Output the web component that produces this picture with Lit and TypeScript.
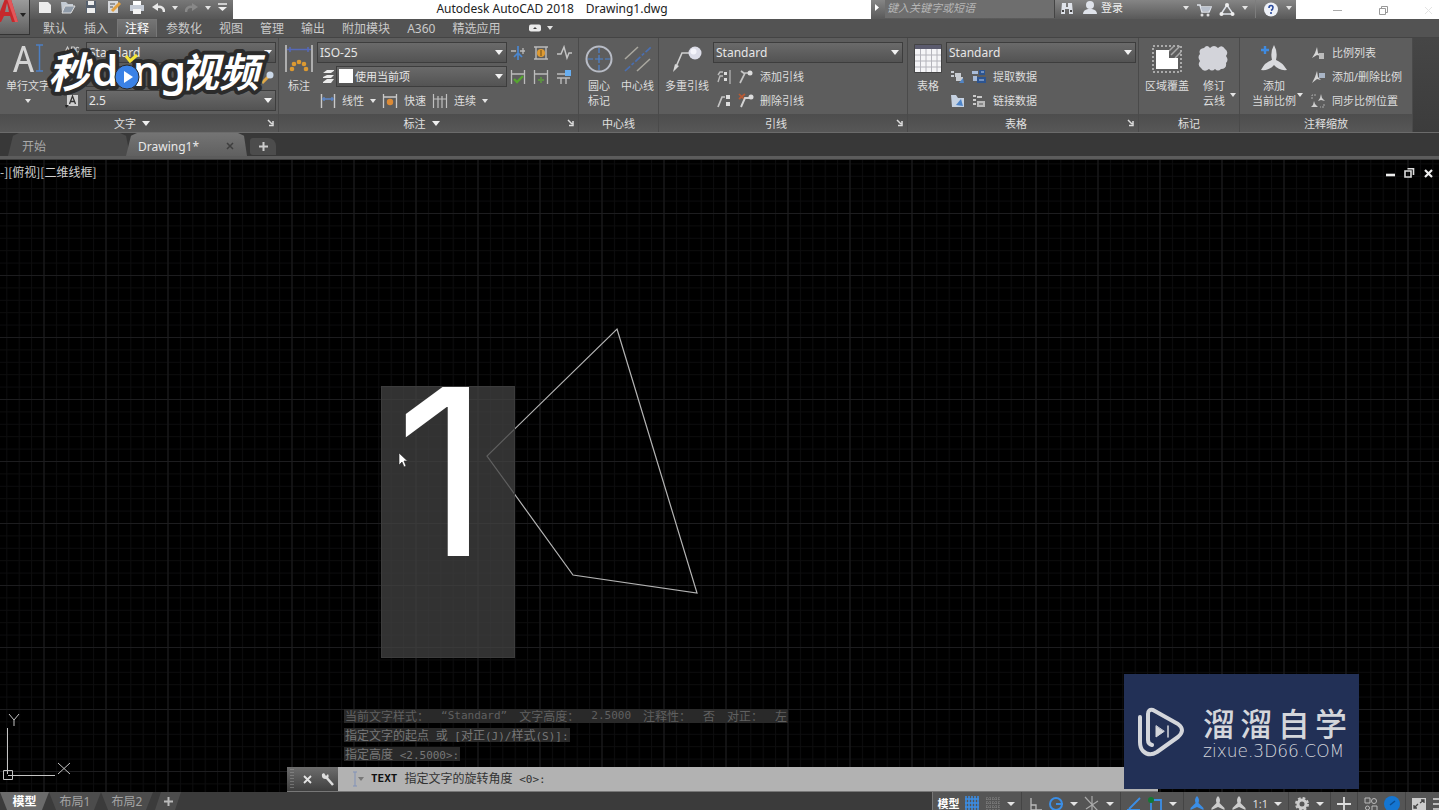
import { LitElement, html, css, svg, nothing, TemplateResult } from "lit";
import { customElement, property } from "lit/decorators.js";

const icon = (w: number, h: number, body: unknown) =>
  html`<svg class="icon" width=${w} height=${h} viewBox="0 0 ${w} ${h}" fill="none" aria-hidden="true">${body}</svg>`;

/* ---------- large ribbon icons (32 x 30) ---------- */
const big = {
  text: svg`<path d="M1 28 10 2h3l9 26h-3.600l-2.600-8H7.200l-2.600 8zM8.200 17h6.800L11.500 6z" fill="#d4d4d4"/>
    <path d="M24 1h7M24 27h7M27.500 1v26" stroke="#4c7fc4" stroke-width="1.500"/>`,
  dim: svg`<path d="M3 1v27M29 1v27" stroke="#c9c9c9" stroke-width="1.500"/><path d="M4 5.500h24M7 3v5M25 3v5" stroke="#5669b8" stroke-width="1.500"/>
    <g fill="#dd9a32"><circle cx="9" cy="25" r="2.300"/><circle cx="11" cy="20" r="2.300"/><circle cx="16" cy="18" r="2.300"/><circle cx="21" cy="20" r="2.300"/><circle cx="23" cy="25" r="2.300"/></g>`,
  center: svg`<circle cx="16" cy="15" r="12.500" stroke="#b8bcc6" stroke-width="2"/><path d="M16 4v5M16 21v5M5 15h5M22 15h5M16 11v8M12 15h8" stroke="#4d83cf" stroke-width="1.200"/>`,
  centerline: svg`<path d="M3 15 16 3M15 27 28 15" stroke="#a9a79f" stroke-width="1.600"/><path d="M3 27 29 3" stroke="#4a6fb0" stroke-width="1.700" stroke-dasharray="7 2 3 2"/>`,
  leader: svg`<path d="M4 25 11 9h9" stroke="#d0d0d0" stroke-width="1.600"/><path d="m2 28 2-8 4 2z" fill="#d8d8d8"/><circle cx="24" cy="9" r="6.500" fill="#dcdde8"/><circle cx="22.500" cy="7.500" r="3" fill="#f5f5fb"/>`,
  table: svg`<path d="M3 1h26v27H3z" fill="#f5f5f7"/><path d="M3 1h26v4H3z" fill="#5b5b6e"/><path d="M3 11h26M3 17h26M3 23h26M8.500 5v23M14 5v23M19.500 5v23M25 5v23" stroke="#b4b4bb" stroke-width="1"/><path d="M2.500.500h27v28h-27z" stroke="#444"/>`,
  wipeout: svg`<path d="M2 2h28v26H2z" stroke="#aaa" stroke-width="2" stroke-dasharray="2 2"/><path d="m18 7 5-5M20 11l9-9M24 14l6-6" stroke="#a8a8a8" stroke-width="1.500"/><path d="M5 6h13v8h9v11H5z" fill="#fff"/>`,
  cloud: svg`<path d="M6 4q3-4 6 0 4-4 8 0 4-4 7 1 4 3 1 7 3 4 0 7 1 6-5 6-3 3-6 0-3 3-6 0-5 4-8-1-4-3-1-7-3-4 0-7-2-5 4-6z" fill="#d3d4da"/>`,
  scale: svg`<path d="M16 1q4 7 2 15 6 2 11 10-8 1-13-5-5 6-13 5 4-8 11-10-2-8 2-15z" fill="#d9dadd"/><path d="M3 6h8M7 2v8" stroke="#3f8be0" stroke-width="2.400"/>`,
};

/* ---------- small ribbon icons (16 x 16) ---------- */
const small = {
  abc: svg`<path d="M1 7 3.500 2 6 7M2 5.500h3M7.500 2v5H10a1.200 1.200 0 0 0 0-2.500H7.500 9.800A1.200 1.200 0 0 0 9.800 2zM15 3q-3-2-3 1.500T15 6.500" stroke="#ccc" stroke-width="1.100"/><path d="m4 11 3 3 6-6" stroke="#78a85e" stroke-width="1.500"/>`,
  style: svg`<path d="M3 2h11v11H3z" fill="#d0d0d0"/><path d="m5.500 11 3-8 3 8M6.500 8.500h4" stroke="#333" stroke-width="1.300"/><path d="M1 12h4l-3 3z" fill="#222"/>`,
  find: svg`<path d="m2 14 6-6" stroke="#e2a849" stroke-width="3"/><circle cx="10" cy="6" r="3.500" fill="#cbd8e8"/>`,
  layers: svg`<path d="m3 4 4-3h8l-4 3zM3 8l4-2h7l-3 3H3zM3 13l4-3h7l-3 4H3z" fill="#ececec"/>`,
  linear: svg`<path d="M1.500 1v14M14.500 1v14" stroke="#c9c9c9" stroke-width="1.400"/><path d="M2 6h12M4 4v4M12 4v4" stroke="#5d87c7" stroke-width="1.400"/>`,
  quick: svg`<path d="M1.500 1v14M14.500 1v14M2 4h12" stroke="#c9c9c9" stroke-width="1.300"/><circle cx="8" cy="9" r="3.200" fill="#dc8a35"/>`,
  cont: svg`<path d="M1.500 1v14M6 3v12M10 3v12M14.500 1v14M2 6h12" stroke="#c0c0c0" stroke-width="1.200"/>`,
  brk: svg`<path d="M1 6h5M10 6h5M13 3v6" stroke="#bbb" stroke-width="1.300"/><path d="M8 1v14M4 12l4-4 4 4" stroke="#4b87cf" stroke-width="1.700"/>`,
  space: svg`<path d="M1 2h14M1 14h14M3 2v12M13 2v12" stroke="#bbb" stroke-width="1.400"/><circle cx="8" cy="8" r="4" fill="#dd9a32"/><path d="M8 5v6" stroke="#6c4a15"/>`,
  jog: svg`<path d="M1 9h4l3-7 3 11 2-5h3" stroke="#c4c4c4" stroke-width="1.500"/>`,
  inspect: svg`<path d="M1.500 1v14M14.500 1v14M2 5h12" stroke="#bbb" stroke-width="1.300"/><path d="m4 10 3 3 6-6" stroke="#56a431" stroke-width="2.400"/>`,
  update: svg`<path d="M1.500 1v14M14.500 1v14M2 5h12" stroke="#bbb" stroke-width="1.300"/><path d="M5 11h6M8 8v6" stroke="#5d8f44" stroke-width="1.800"/>`,
  toler: svg`<path d="M1 5h9M5 9v6M10 9v6M1 9h13" stroke="#bbb" stroke-width="1.400"/><path d="M9 1h6v6H9z" fill="#68aef0"/>`,
  align: svg`<path d="m2 13 2-6h3M2 6l2-3h3" stroke="#bbb" stroke-width="1.400"/><path d="M8 3h3v3H8zM8 9h3v3H8z" fill="#ddd"/><path d="M14 1v14" stroke="#ccc"/>`,
  addLd: svg`<path d="m2 14 5-10h3M3 2l4 3" stroke="#c4c4c4" stroke-width="1.700"/><circle cx="12" cy="4" r="2.500" fill="#ddd"/>`,
  collect: svg`<path d="m2 14 4-10h3" stroke="#c4c4c4" stroke-width="1.700"/><path d="M10 2h4v4h-4zM10 9h4v4h-4z" fill="#ddd"/>`,
  delLd: svg`<path d="m1 1 5 5M7 1 1 6" stroke="#b85a34" stroke-width="1.700"/><path d="m3 14 4-9h4" stroke="#d3d3d3" stroke-width="1.900"/><circle cx="13" cy="4" r="2.500" fill="#ddd"/>`,
  extract: svg`<path d="M2 2h3v2H2zM2 6h3v2H2zM6 4h6v4h2v4H7V8H6z" fill="#c8ccd2"/><path d="m10 14 4-5 1 5z" fill="#5285c4"/>`,
  sync: svg`<path d="M1 2h6v3H1zM2 7h4v5H2z" fill="#a8bbd8"/><path d="M8 1h6v5H8zM6 8h9v6H6z" fill="#2c5490"/><path d="M8 11h5M10 3h3" stroke="#b7cdf0"/>`,
  link: svg`<path d="M2 2h5l2 3h6v9H3z" fill="#c6d2e2"/><path d="m7 12 5-6 2 7z" fill="#4c84c9"/>`,
  dlink: svg`<path d="M2 2h3v2H2zM2 6h3v2H2zM2 10h3v2H2zM6 3h5v2H6z" fill="#c9c9c9"/><path d="M6 8h8v6H6z" fill="#b9b9b9"/><path d="M8 11h4" stroke="#555"/>`,
  slist: svg`<path d="m7 2 1 6 3 3-4-1-5 3 3-5z" fill="#d6d6d6"/><path d="M9 8h5v6H9z" fill="#bbb"/>`,
  sadd: svg`<path d="m7 2 1 6 3 3-4-1-5 4 3-6z" fill="#d6d6d6"/><path d="M9 4h6v5H9z" fill="#a9b5c6"/>`,
  ssync: svg`<path d="M2 6V2h4M14 11v3h-4" stroke="#aaa" stroke-dasharray="2 1"/><path d="m11 1 1 4 3 3-4-1-3 1 2-3zM4 8l1 3 3 3H1l2-2z" fill="#cfcfcf"/>`,
};

/* ---------- quick access ---------- */
const quick = [
  svg`<path d="M2 2h9l3 3v8H2z" fill="#ececec"/>`,
  svg`<path d="M1 2h5l2 2h5v2H5l-3 7z" fill="#c4cbd4"/><path d="m2 13 3-7h10l-4 7z" fill="#8e9aa8" stroke="#ddd"/>`,
  svg`<path d="M3 1h10v12H3z" fill="#56606d"/><path d="M5 1h6v4H5zM4 8h8v5H4z" fill="#eee"/>`,
  svg`<path d="M2 1h10v12H2z" fill="#d6d8dc"/><path d="m6 11 8-8" stroke="#e2a142" stroke-width="3"/><path d="M4 4h5M4 7h3" stroke="#555"/>`,
  svg`<path d="M4 1h8v4H4z" fill="#fff"/><path d="M1 5h14v6H1z" fill="#c6ccd6"/><path d="M4 9h8v5H4z" fill="#f4f4f4"/>`,
];

const cjk = /([\u2e80-\u9fff\uff00-\uffef]+)/;
const mixed = (text: string) =>
  text.split(cjk).map((run) => (run === "" ? nothing : cjk.test(run) ? html`<span class="han">${run}</span>` : run));

@customElement("cad-combo")
export class CadCombo extends LitElement {
  @property() value = "";
  @property() label = "";
  @property({ type: Boolean }) swatch = false;

  static styles = css`
    :host { display: block; position: relative; flex: 1; height: 21px; min-width: 0; }
    select {
      appearance: none; display: block; box-sizing: border-box; width: 100%; height: 21px; margin: 0; padding: 0 16px 0 2px;
      border: 1px solid #3d3d3d; border-radius: 0; color: #e6e6e6;
      background: linear-gradient(#6a6a6a, #535353);
      font: 12px/19px "Noto Sans", "Noto Sans CJK SC", sans-serif;
    }
    select.swatched { padding-left: 18px; font-size: 11px; }
    .arrow { position: absolute; right: 4px; top: 8px; border: 4px solid transparent; border-top: 5px solid #f2f2f2; border-bottom: 0; pointer-events: none; }
    .chip { position: absolute; left: 3px; top: 3px; width: 14px; height: 14px; background: #fff; pointer-events: none; }
  `;

  render() {
    return html`<select class=${this.swatch ? "swatched" : ""} aria-label=${this.label}><option>${this.value}</option></select>
      ${this.swatch ? html`<span class="chip"></span>` : nothing}<span class="arrow"></span>`;
  }
}

@customElement("cad-panel")
export class CadPanel extends LitElement {
  @property() name = "";
  @property({ type: Boolean }) more = false;
  @property({ type: Boolean }) launcher = false;

  static styles = css`
    :host { display: flex; flex-direction: column; flex: none; box-sizing: border-box; border-right: 1px solid #4a4a4a; background: #5d5d5d; }
    .body { display: flex; flex: 1; padding: 4px 2px 0 4px; }
    footer { position: relative; display: flex; justify-content: center; align-items: center; gap: 6px; height: 18px; background: linear-gradient(#4d4d4d, #575757); color: #e0e0e0; }
    footer.corner { padding-right: 14px; }
    .more { border: 4px solid transparent; border-top: 5px solid #eee; border-bottom: 0; }
    button { position: absolute; right: 3px; top: 5px; width: 8px; height: 8px; padding: 0; border: 0; background: none; }
    svg { display: block; }
  `;

  render() {
    return html`<div class="body"><slot></slot></div>
      <footer class=${this.launcher ? "corner" : ""}><span>${this.name}</span>${this.more ? html`<span class="more"></span>` : nothing}
        ${this.launcher
          ? html`<button aria-label=${this.name}><svg width="8" height="8" viewBox="0 0 8 8"><path d="M1 1l4 4M6 2v4.500H2" stroke="#ddd" stroke-width="1.500" fill="none" /></svg></button>`
          : nothing}
      </footer>`;
  }
}

@customElement("app-root")
export class AppRoot extends LitElement {
  static styles = css`
    :host { display: flex; flex-direction: column; height: 100vh; overflow: hidden; background: #383838; color: #dedede; font: 11px/15px "Noto Sans", "Noto Sans CJK SC", sans-serif; }
    * { box-sizing: border-box; }
    button { display: flex; align-items: center; margin: 0; padding: 0; border: 0; background: none; color: inherit; font: inherit; }
    .icon { display: block; flex: none; }
    .caret { flex: none; border: 3px solid transparent; border-top: 4px solid #e4e4e4; border-bottom: 0; }

    /* title bar */
    .titlebar { position: relative; display: flex; flex: none; height: 19px; background: #fff; color: #333; }
    .appbtn { position: absolute; z-index: 2; left: 0; top: 0; width: 30px; height: 35px; border: 1px solid #333; border-width: 0 1px 1px 0; background: linear-gradient(#9b9b9b, #5f5f5f); }
    .quick { display: flex; align-items: flex-start; gap: 7px; width: 233px; padding: 0 5px 0 37px; background: linear-gradient(#787878, #565656); }
    .quick .caret { margin-top: 6px; }
    .title { display: flex; flex: 1; justify-content: center; gap: 12px; font: 12px/17px "Noto Sans", sans-serif; color: #222; white-space: nowrap; }
    .info { display: flex; align-items: flex-start; width: 425px; background: linear-gradient(#858585, #595959); color: #eee; }
    .info .caret { margin-top: 6px; }
    .search { width: 170px; height: 18px; margin: 0 4px 0 5px; padding: 0 2px 4px; border: 0; border-right: 1px solid #444; background: #6e6e6e; font: italic 11px/14px "Noto Sans CJK SC", sans-serif; }
    .search::placeholder { color: #b6b6b6; opacity: 1; }
    .signin { gap: 4px; margin-left: 8px; flex: 1; }
    .tray { display: flex; gap: 7px; padding-right: 4px; }
    .tray i { width: 1px; height: 18px; background: #7d7d7d; }
    .winbtns { display: flex; justify-content: space-between; width: 143px; padding: 2px 5px 0 36px; }

    /* ribbon tabs */
    .tabs { display: flex; gap: 1px; flex: none; height: 19px; padding-left: 35px; background: #535353; border-bottom: 1px solid #444; font-size: 12px; }
    .tabs button { padding: 0 8px; height: 18px; color: #cacaca; }
    .tabs button.on { border: 1px solid #777; border-bottom: 0; padding: 0 7px; background: linear-gradient(#757575, #606060); color: #fff; }
    .tabs .drop { gap: 6px; margin-left: 12px; }

    /* ribbon */
    .ribbon { display: flex; flex: none; height: 95px; border-bottom: 1px solid #6b6b6b; background: linear-gradient(#464646, #3c3c3c); }
    .big { position: relative; flex-direction: column; justify-content: flex-start; align-self: flex-start; gap: 4px; padding: 2px 0 0; line-height: 15px; text-align: center; white-space: nowrap; }
    .big .caret { margin-top: 2px; }
    .big .side { position: absolute; right: -3px; top: 49px; }
    .rows { display: flex; flex-direction: column; gap: 3px; }
    .row { display: flex; align-items: center; height: 21px; gap: 6px; white-space: nowrap; }
    .row.tight { gap: 2px; }
    .row button { gap: 6px; }
    .find { flex: 1; height: 21px; min-width: 0; border: 1px solid #3d3d3d; background: #585858; color: #eee; }
    .w-text { width: 212px; margin-left: 12px; }
    .w-std { width: 190px; margin-left: 2px; }
    .p-text { width: 279px; } .p-dim { width: 300px; } .p-center { width: 80px; } .p-leader { width: 249px; } .p-table { width: 231px; } .p-mark { width: 101px; } .p-scale { width: 173px; }
    .w48 { width: 48px; } .w52 { width: 52px; } .w32 { width: 32px; } .w38 { width: 38px; }
    .grid3 { display: grid; grid-template-columns: repeat(3, 16px); grid-auto-rows: 16px; gap: 8px 7px; margin: 3px 0 0 3px; align-self: flex-start; }
    .indent { padding-left: 3px; }
    .spread { margin-left: 4px; }
    .scales { margin-left: 10px; }

    /* drawing tabs */
    .files { display: flex; flex: none; height: 23px; padding-left: 8px; background: #383838; }
    .files button { height: 23px; padding-top: 3px; font-size: 12px; }
    .files .file { width: 122px; padding: 3px 14px 0; background: #4b4b4b; color: #a9a9a9; clip-path: polygon(0 100%, 5px 12%, 11px 0, 112px 0, 118px 12%, 100% 100%); }
    .files .on { width: 121px; justify-content: space-between; padding: 3px 13px 0 12px; margin-left: -4px; background: linear-gradient(#747474, #606060); color: #e8e8e8; }
    .files .plus { width: 26px; height: 17px; padding: 0; margin: 5px 0 0 3px; justify-content: center; border-radius: 3px 8px 0 3px; background: #4c4c4c; }
    .bar { flex: none; height: 4px; background: #5c5c5c; border-bottom: 1px solid #3d3d3d; }

    /* canvas */
    .canvas { position: relative; flex: 1; min-height: 0; overflow: hidden; background: #000; }
    .scene { position: absolute; inset: 0; width: 100%; height: 100%; }
    .view { position: absolute; left: 0; top: 4px; color: #d0d0d0; font: 12px/16px "Noto Sans CJK SC", sans-serif; }
    .docbtns { position: absolute; right: 4px; top: 6px; display: flex; gap: 6px; }
    .edit { position: absolute; left: 381px; top: 226px; width: 134px; height: 272px; margin: 0; padding: 0 0 0 13px; border: 1px solid #3c3c3c; resize: none; overflow: hidden; background: rgba(67, 67, 67, 0.75); color: #fff; font: 232px/170px Inter, sans-serif; }
    .pointer { position: absolute; left: 398px; top: 292px; }
    .console { position: absolute; left: 287px; bottom: 0; width: 871px; }
    .log { display: flex; flex-direction: column; align-items: flex-start; gap: 5px; padding: 0 0 6px 57px; }
    .log p { display: flex; gap: 12px; margin: 0; padding: 0 1px; height: 14px; background: #292929; color: #777; white-space: pre; }
    .log p.dim { color: #606060; }
    .log, .cmd { font: 11px/14px "DejaVu Sans Mono", "Noto Sans CJK SC", monospace; }
    .han { font: 12px/14px "Noto Sans CJK SC", sans-serif; }
    .cmd { display: flex; height: 25px; background: #b2b2b2; color: #333; border-bottom: 1px solid #777; }
    .grip { display: flex; align-items: center; gap: 9px; width: 51px; padding-left: 3px; background: linear-gradient(#6d6d6d, #3f3f3f); }
    .prompt { display: flex; flex: 1; align-items: center; padding-left: 14px; gap: 7px; white-space: pre; }
    .prompt b { color: #111; }
    .entry { flex: 1; min-width: 0; border: 0; background: none; font: inherit; }

    /* overlaid marks */
    .mark { position: absolute; z-index: 3; left: 44px; top: 34px; pointer-events: none; }
    .brand { position: absolute; z-index: 3; right: 80px; bottom: 21px; display: flex; align-items: center; gap: 18px; width: 235px; height: 115px; padding: 0 12px 0 13px; background: #223056; color: #d4d6db; }
    .brand div { flex: 1; }
    .brand .name { display: flex; justify-content: space-between; font: 500 32px/40px "Noto Sans CJK SC", sans-serif; }
    .brand .site { display: block; font: 200 17px/19px "DejaVu Sans", sans-serif; color: inherit; text-decoration: none; }

    /* status bar */
    .status { display: flex; flex: none; justify-content: space-between; height: 18px; overflow: hidden; background: #3b3b3b; }
    .layouts { display: flex; font-size: 12px; }
    .layouts button { justify-content: center; width: 52px; height: 18px; background: #4c4c4c; color: #a4a4a4; clip-path: polygon(0 0, 100% 0, calc(100% - 7px) 100%, 7px 100%); }
    .layouts button.on { width: 49px; background: #6b6b6b; color: #fff; font-weight: bold; }
    .layouts button.add { width: 26px; margin-left: 2px; clip-path: polygon(6px 0, 100% 0, calc(100% - 6px) 100%, 0 100%); }
    .tools { display: flex; align-items: flex-start; gap: 5px; height: 24px; margin-right: -9px; padding: 4px 0 0 4px; background: #555; border-left: 1px solid #777; }
    .tools .caret { margin: 6px 1px 0; border-width: 4px 4px 0; }
    .tools b { color: #fff; font-size: 11px; line-height: 16px; }
    .tools i { width: 1px; height: 24px; margin-top: -4px; background: #444; }
  `;

  private bigButton(art: unknown, label: TemplateResult | string, cls: string, extra: unknown = nothing) {
    return html`<button class="big ${cls}">${icon(32, 30, art)}<span>${label}</span>${extra}</button>`;
  }

  private tiny(art: unknown, label: string) {
    return html`<button aria-label=${label}>${icon(16, 16, art)}</button>`;
  }

  private caret = html`<span class="caret"></span>`;

  private titleBar() {
    return html`<header class="titlebar">
      <button class="appbtn" aria-label="A">${icon(29, 34, svg`<path d="M-4 22 6-4h4l8 26h-6l-2-6H4l-3 6zM5 12h4L7 3z" fill="#c6282c"/><path d="M6-4h4l8 26h-3z" fill="#e2575a"/><path d="M20 13h6l-3 4z" fill="#222"/>`)}</button>
      <div class="quick">
        ${quick.map((q) => html`<button aria-label="快速访问">${icon(16, 15, q)}</button>`)}
        <button aria-label="放弃">${icon(13, 15, svg`<path d="M12 12q0-6-7-5" stroke="#e8e8e8" stroke-width="2.500"/><path d="M0 7l6-4v8z" fill="#e8e8e8"/>`)}</button>${this.caret}
        <button aria-label="重做">${icon(13, 15, svg`<path d="M1 12q0-6 7-5" stroke="#888" stroke-width="2.500"/><path d="m13 7-6-4v8z" fill="#888"/>`)}</button>${this.caret}
        <button aria-label="自定义">${icon(9, 15, svg`<path d="M0 4h9" stroke="#eee" stroke-width="1.500"/><path d="M0 7h9l-4.500 4z" fill="#eee"/>`)}</button>
      </div>
      <div class="title"><span>Autodesk AutoCAD 2018</span><span>Drawing1.dwg</span></div>
      <div class="info">
        <button aria-label="展开">${icon(9, 15, svg`<path d="M4 4v7l4-3.500z" fill="#fff"/>`)}</button>
        <input class="search" placeholder="键入关键字或短语" aria-label="键入关键字或短语" />
        <button aria-label="搜索">${icon(16, 15, svg`<path d="M2 14 3 3h4v4h2V3h4l1 11h-4V9H6v5z" fill="#dfe3ea"/><path d="M3 11h2M11 11h2" stroke="#444" stroke-width="2"/>`)}</button>
        <button class="signin">${icon(14, 15, svg`<circle cx="7" cy="5" r="4" fill="#dfe3ea"/><path d="M0 14q0-4 5-5h4q5 1 5 5z" fill="#dfe3ea"/>`)}<span>登录</span></button>
        <div class="tray">${this.caret}
          <button aria-label="商店">${icon(16, 15, svg`<path d="M1 3h3l2 7h7l2-5H5" stroke="#dfe3ea" stroke-width="1.600"/><path d="M5 5h10l-2 4H6z" fill="#b9c0cc"/><circle cx="6" cy="13" r="1.500" fill="#ddd"/><circle cx="12" cy="13" r="1.500" fill="#ddd"/>`)}</button>
          <button aria-label="连接">${icon(16, 15, svg`<path d="M8 3 2 12h12z" stroke="#dfe3ea" stroke-width="1.500"/><circle cx="8" cy="3" r="2" fill="#eee"/><circle cx="2.500" cy="12" r="2" fill="#eee"/><circle cx="13.500" cy="12" r="2" fill="#eee"/>`)}</button>${this.caret}<i></i>
          <button aria-label="帮助">${icon(16, 15, svg`<circle cx="8" cy="7.500" r="7" fill="#eef1f7"/><path d="M6 6q0-2.500 2-2.500T10 5.500 8 8.500M8 10v2" stroke="#2a4a9c" stroke-width="1.600"/>`)}</button>${this.caret}
        </div>
      </div>
      <div class="winbtns">
        <button aria-label="最小化">${icon(11, 11, svg`<path d="M1 5.500h9" stroke="#aaa"/>`)}</button>
        <button aria-label="还原">${icon(11, 11, svg`<path d="M1.500 3.500h6v6h-6zM3.500 3V1.500h6v6H8" stroke="#999"/>`)}</button>
        <button aria-label="关闭">${icon(11, 11, svg`<path d="m2 2 7 7M9 2 2 9" stroke="#e4e4e4"/>`)}</button>
      </div>
    </header>`;
  }

  private ribbon() {
    return html`<section class="ribbon">
      <cad-panel class="p-text" name="文字" more launcher>
        ${this.bigButton(big.text, "单行文字", "w48", this.caret)}
        <div class="rows w-text">
          <div class="row">${this.tiny(small.abc, "拼写检查")}<cad-combo value="Standard" label="文字样式"></cad-combo></div>
          <div class="row">${icon(16, 16, nothing)}<input class="find" aria-label="查找文字" />${this.tiny(small.find, "查找")}</div>
          <div class="row">${this.tiny(small.style, "文字高度")}<cad-combo value="2.5" label="文字高度"></cad-combo></div>
        </div>
      </cad-panel>
      <cad-panel class="p-dim" name="标注" more launcher>
        ${this.bigButton(big.dim, "标注", "w32")}
        <div class="rows w-std">
          <div class="row"><cad-combo value="ISO-25" label="标注样式"></cad-combo></div>
          <div class="row tight indent">${icon(14, 16, small.layers)}<cad-combo value="使用当前项" label="图层" swatch></cad-combo></div>
          <div class="row indent"><button>${icon(16, 16, small.linear)}线性</button>${this.caret}
            <button>${icon(16, 16, small.quick)}快速</button><button>${icon(16, 16, small.cont)}连续</button>${this.caret}</div>
        </div>
        <div class="grid3">
          ${this.tiny(small.brk, "打断")}${this.tiny(small.space, "调整间距")}${this.tiny(small.jog, "折弯")}
          ${this.tiny(small.inspect, "检验")}${this.tiny(small.update, "更新")}${this.tiny(small.toler, "公差")}
        </div>
      </cad-panel>
      <cad-panel class="p-center" name="中心线">
        ${this.bigButton(big.center, html`圆心<br />标记`, "w32")}${this.bigButton(big.centerline, "中心线", "w38 spread")}
      </cad-panel>
      <cad-panel class="p-leader" name="引线" launcher>
        ${this.bigButton(big.leader, "多重引线", "w48")}
        <div class="rows w-std">
          <div class="row"><cad-combo value="Standard" label="引线样式"></cad-combo></div>
          <div class="row indent">${this.tiny(small.align, "对齐")}<button>${icon(16, 16, small.addLd)}添加引线</button></div>
          <div class="row indent">${this.tiny(small.collect, "合并")}<button>${icon(16, 16, small.delLd)}删除引线</button></div>
        </div>
      </cad-panel>
      <cad-panel class="p-table" name="表格" launcher>
        ${this.bigButton(big.table, "表格", "w32")}
        <div class="rows w-std">
          <div class="row"><cad-combo value="Standard" label="表格样式"></cad-combo></div>
          <div class="row indent">${this.tiny(small.extract, "提取")}<button>${icon(16, 16, small.sync)}提取数据</button></div>
          <div class="row indent">${this.tiny(small.link, "上载")}<button>${icon(16, 16, small.dlink)}链接数据</button></div>
        </div>
      </cad-panel>
      <cad-panel class="p-mark" name="标记">
        ${this.bigButton(big.wipeout, "区域覆盖", "w48")}
        ${this.bigButton(big.cloud, html`修订<br />云线`, "w38 spread", html`<span class="caret side"></span>`)}
      </cad-panel>
      <cad-panel class="p-scale" name="注释缩放">
        ${this.bigButton(big.scale, html`添加<br />当前比例`, "w52 spread", html`<span class="caret side"></span>`)}
        <div class="rows scales">
          <div class="row"><button>${icon(16, 16, small.slist)}比例列表</button></div>
          <div class="row"><button>${icon(16, 16, small.sadd)}添加/删除比例</button></div>
          <div class="row"><button>${icon(16, 16, small.ssync)}同步比例位置</button></div>
        </div>
      </cad-panel>
    </section>`;
  }

  private canvas() {
    return html`<main class="canvas">
      <svg class="scene" aria-hidden="true">
        <defs>
          <pattern id="minor" x="43.500" y="53" width="12.400" height="12.400" patternUnits="userSpaceOnUse"><path d="M.500 0v12.400M0 .500h12.400" stroke="#0d0d0e" fill="none" /></pattern>
          <pattern id="major" x="43.500" y="53" width="62" height="62" patternUnits="userSpaceOnUse"><path d="M.500 0v62M0 .500h62" stroke="#1d1d1f" fill="none" /></pattern>
        </defs>
        <rect width="100%" height="100%" fill="url(#minor)" /><rect width="100%" height="100%" fill="url(#major)" />
        <path d="M617 169 697 433 573 415 487 296z" fill="none" stroke="#b4b4b4" stroke-width="1.200" />
        <g fill="none" stroke="#c4c4c4"><path d="M7.500 568v46M8 615.500h47M3.500 610.500h9v9h-9zM9 554l5 6 5-6M14 560v6M58 603l12 11M70 603l-12 11" /></g>
      </svg>
      <span class="view">-][俯视][二维线框]</span>
      <div class="docbtns">
        <button aria-label="最小化视口">${icon(13, 14, svg`<path d="M2 9h9" stroke="#eee" stroke-width="2.600"/>`)}</button>
        <button aria-label="还原视口">${icon(13, 14, svg`<path d="M2 5h6v6H2zM4.500 2.800h6V9" stroke="#ddd" stroke-width="1.600"/>`)}</button>
        <button aria-label="关闭视口">${icon(13, 14, svg`<path d="m3 4 7 7M10 4l-7 7" stroke="#eee" stroke-width="2.200"/>`)}</button>
      </div>
      <textarea class="edit" aria-label="单行文字" .value=${"1"}></textarea>
      <svg class="pointer" width="10" height="16" viewBox="0 0 10 16"><path d="M1 1v12l3-3 2 5 2-1-2-5h3.500z" fill="#fff" stroke="#222" stroke-width=".6" /></svg>
      <div class="console">
        <div class="log">
          <p class="dim">${["当前文字样式：", "“Standard”", "文字高度：", "2.5000", "注释性：", "否", "对正：", "左"].map((s) => html`<span>${mixed(s)}</span>`)}</p>
          <p><span>${mixed("指定文字的起点 或 [对正(J)/样式(S)]:")}</span></p>
          <p><span>${mixed("指定高度 <2.5000>:")}</span></p>
        </div>
        <div class="cmd">
          <div class="grip">
            ${icon(4, 22, svg`<path d="M1 1v20M3 1v20" stroke="#999" stroke-dasharray="1 2"/>`)}
            <button aria-label="关闭">${icon(9, 9, svg`<path d="m1 1 7 7M8 1 1 8" stroke="#e4e4e4" stroke-width="1.800"/>`)}</button>
            <button aria-label="自定义">${icon(14, 14, svg`<path d="m5 5 7 8" stroke="#ddd" stroke-width="2.500"/><path d="M1 2q-1 5 4 5 4-1 2-5l-2 2-2-3z" fill="#ddd"/>`)}</button>
          </div>
          <label class="prompt">${icon(12, 16, svg`<path d="M1 1h4M3 1v14M1 15h4" stroke="#8192b8"/><path d="M6 6h6l-3 4z" fill="#777"/>`)}<b>TEXT</b><span>${mixed("指定文字的旋转角度 <0>:")}</span><input class="entry" /></label>
        </div>
      </div>
    </main>`;
  }

  private statusBar() {
    const blue = "#3b8ee6";
    const s = (body: unknown, label: string) => html`<button aria-label=${label}>${icon(16, 16, body)}</button>`;
    const fig = (c: string) => svg`<path d="M8 0q3 3 1.500 7l5 5v2L8 11l-6.500 3v-2l5-5Q5 3 8 0z" fill=${c}/>`;
    return html`<footer class="status">
      <div class="layouts"><button class="on">模型</button><button>布局1</button><button>布局2</button><button class="add" aria-label="新建布局">${icon(9, 9, svg`<path d="M4.500 0v9M0 4.500h9" stroke="#bbb" stroke-width="2"/>`)}</button></div>
      <div class="tools">
        <b>模型</b>
        ${s(svg`<path d="M2 0v16M5 0v16M8 0v16M11 0v16M14 0v16M1 3h14M1 7h14M1 11h14" stroke=${blue} stroke-width="1.500"/>`, "栅格")}
        ${s(svg`<path d="M2 1v15M5 1v15M8 1v15M11 1v15M14 1v15M1 3h14M1 7h14M1 11h14" stroke="#888" stroke-dasharray="1 1"/>`, "捕捉")}${this.caret}<i></i>
        ${s(svg`<path d="M4 2v12h11M4 9h5v5" stroke="#bbb" stroke-width="1.300"/>`, "正交")}
        ${s(svg`<circle cx="8" cy="8" r="6" stroke=${blue} stroke-width="2"/><path d="M8 8h7" stroke=${blue} stroke-width="2"/>`, "极轴")}${this.caret}
        ${s(svg`<path d="m1 1 13 14M14 5 2 13M8 0v15" stroke="#aaa" stroke-width="1.200"/>`, "等轴测")}${this.caret}<i></i>
        ${s(svg`<path d="M14 2 3 13M1 14h13" stroke=${blue} stroke-width="1.800"/>`, "追踪")}
        ${s(svg`<path d="M4 4h10v12H4z" stroke=${blue} stroke-width="1.800"/><circle cx="4" cy="4" r="3" fill="#147a35"/>`, "对象捕捉")}${this.caret}<i></i>
        ${s(fig(blue), "注释对象")}${s(fig("#ccc"), "自动缩放")}${s(fig("#ccc"), "注释比例")}
        <button>1:1</button>${this.caret}<i></i>
        ${s(svg`<circle cx="8" cy="8" r="4" stroke="#ccc" stroke-width="3"/><circle cx="8" cy="8" r="6" stroke="#ccc" stroke-width="2" stroke-dasharray="2.700 2"/>`, "工作空间")}${this.caret}<i></i>
        ${s(svg`<path d="M8 1v14M1 8h14" stroke="#ddd" stroke-width="1.800"/>`, "监视器")}<i></i>
        ${s(svg`<path d="M2 2h5v5H2zM9 10h5v5H9z" stroke="#bbb"/><circle cx="11" cy="5" r="2.500" stroke="#bbb"/><circle cx="4.500" cy="12" r="2" stroke="#bbb"/>`, "隔离对象")}
        ${s(svg`<circle cx="8" cy="8" r="8" fill="#1476d2"/><path d="m6 9 5-4" stroke="#0b4c90" stroke-width="1.500"/>`, "硬件加速")}<i></i>
        ${s(svg`<path d="M1 2h14v12H1z" fill="#ccc"/><path d="m3 12 4-4M9 7l4-3M10 4h3v3M3 9v3h3" stroke="#444" stroke-width="1.300"/>`, "全屏")}
        ${s(svg`<path d="M1 3h15M1 8h15M1 13h15" stroke="#ddd" stroke-width="1.500"/>`, "自定义")}
      </div>
    </footer>`;
  }

  render() {
    const tabs = ["默认", "插入", "注释", "参数化", "视图", "管理", "输出", "附加模块", "A360", "精选应用"];
    return html`
      ${this.titleBar()}
      <nav class="tabs">
        ${tabs.map((t) => html`<button class=${t === "注释" ? "on" : ""}>${t}</button>`)}
        <button class="drop" aria-label="最小化功能区">${icon(12, 8, svg`<rect width="12" height="7" y=".5" rx="2" fill="#ececec"/><path d="M4 5h4L6 3z" fill="#444"/>`)}${this.caret}</button>
      </nav>
      ${this.ribbon()}
      <nav class="files">
        <button class="file">开始</button>
        <button class="file on"><span>Drawing1*</span>${icon(8, 8, svg`<path d="m1 1 6 6M7 1 1 7" stroke="#3e3e3e" stroke-width="1.500"/>`)}</button>
        <button class="plus" aria-label="新图形">${icon(9, 9, svg`<path d="M4.500 0v9M0 4.500h9" stroke="#ccc" stroke-width="2"/>`)}</button>
      </nav>
      <div class="bar"></div>
      ${this.canvas()}
      ${this.statusBar()}
      <svg class="mark" width="236" height="84" viewBox="0 0 236 84">
        <g fill="#fff" stroke="#2b2b2b" stroke-width="8" stroke-linejoin="round" paint-order="stroke" font-family="Noto Sans CJK SC, sans-serif" font-weight="700" font-style="italic">
          <text x="4" y="54" font-size="42">秒</text>
          <text x="135" y="53" font-size="40">视频</text>
          <g font-family="Noto Sans, sans-serif" font-weight="600" font-size="42" font-style="normal"><text x="48" y="52">d</text><text x="89" y="52">ng</text></g>
        </g>
        <circle cx="83" cy="43" r="12" fill="#3b82e6" stroke="#2b2b2b" /><path d="m80 37 9 6-9 6z" fill="#fff" />
        <path d="m82 22 4 5 7-6" stroke="#f4e436" stroke-width="3" fill="none" />
      </svg>
      <aside class="brand">
        <svg class="icon" width="48" height="50" viewBox="0 0 48 50" fill="none" stroke="#d4d6db" stroke-linecap="round" stroke-linejoin="round">
          <path d="M15 38q-4-1-4-5V7q0-5 5-4l25 14q8 6 0 13L20 45q-8 5-14-1-3-3-3-9V10" stroke-width="4" />
          <path d="M19 19v11l8-5.500z" fill="#d4d6db" stroke-width="1" /><path d="M31 19v11" stroke-width="1.500" />
        </svg>
        <div><span class="name"><span>溜</span><span>溜</span><span>自</span><span>学</span></span><a class="site" href="#">zixue.3D66.COM</a></div>
      </aside>
    `;
  }
}
